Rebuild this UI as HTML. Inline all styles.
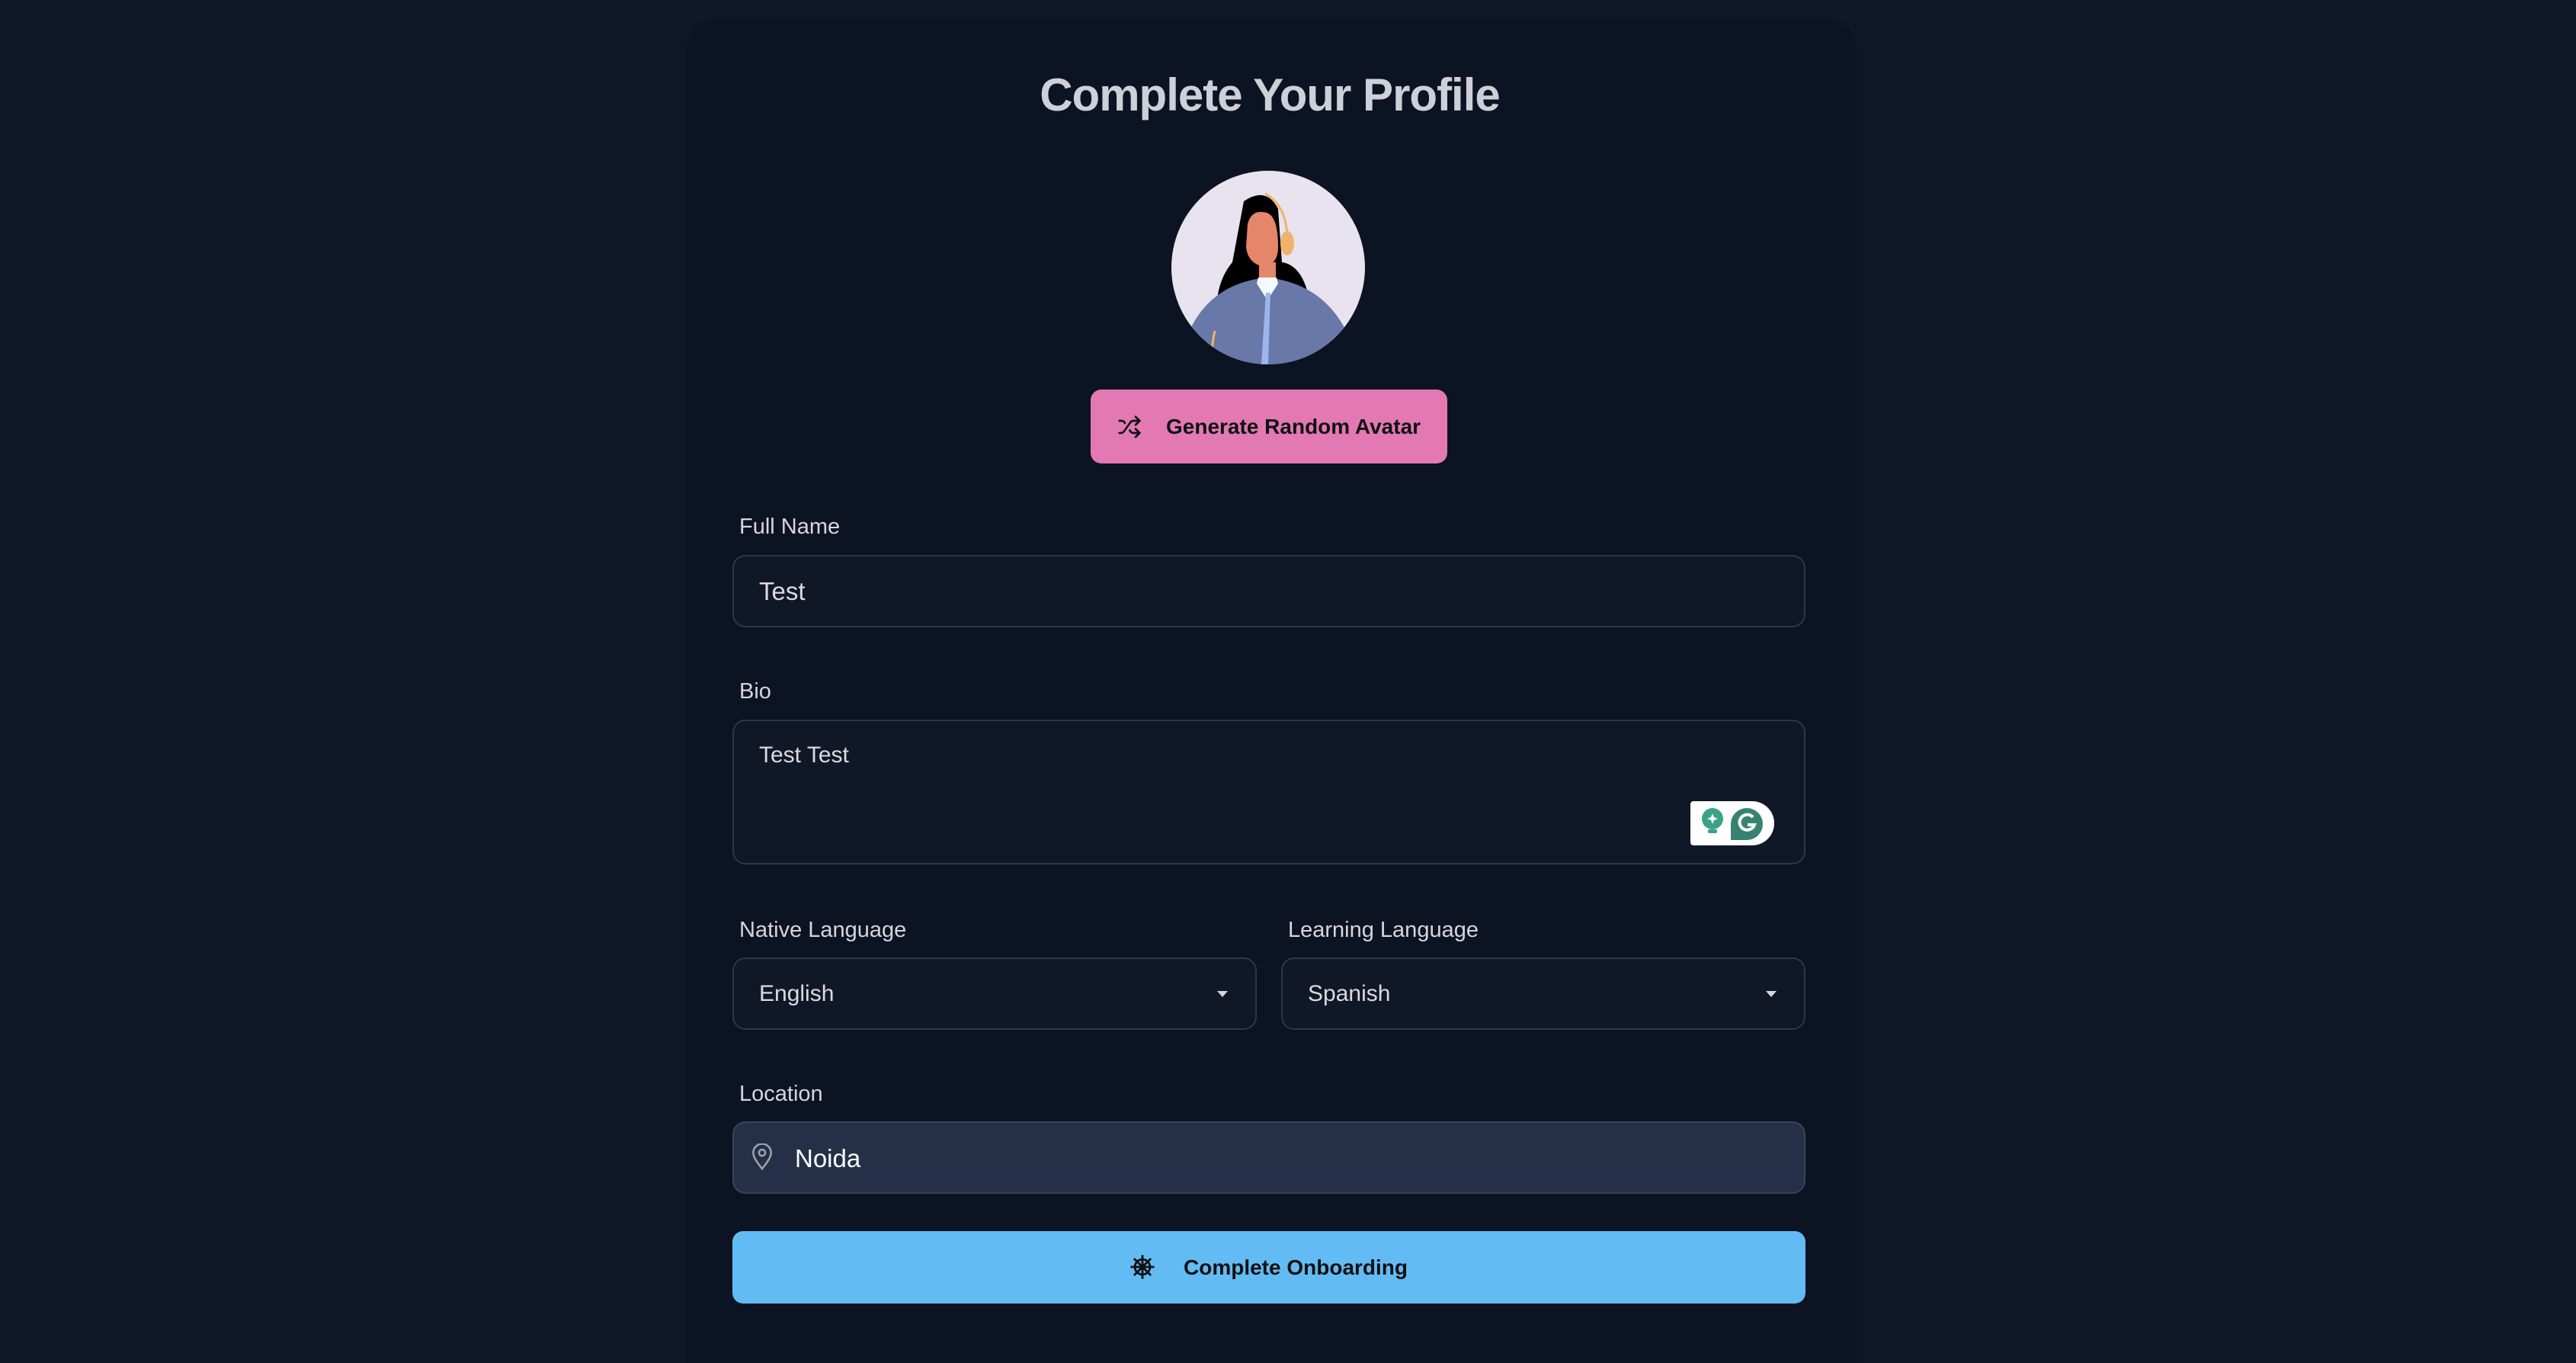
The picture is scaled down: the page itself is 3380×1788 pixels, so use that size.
<!DOCTYPE html>
<html><head><meta charset="utf-8"><style>
*{box-sizing:border-box;margin:0;padding:0}
html,body{width:3380px;height:1788px;background:#0f1729;overflow:hidden;font-family:"Liberation Sans",sans-serif;position:relative}
.card{position:absolute;left:901px;top:24px;width:1535px;height:1764px;background:#0c1322;border-radius:40px 40px 0 0}
.abs{position:absolute}
h1{position:absolute;left:901px;width:1530px;top:90px;text-align:center;color:#cdd0d6;font-size:60px;font-weight:bold;letter-spacing:-1px}
.lbl{position:absolute;left:970px;color:#d4d7dd;font-size:29px}
.box{position:absolute;background:#101828;border:2px solid #2f3644;border-radius:17px}
.txt{position:absolute;color:#d8dbe0}
</style></head><body>
<div class="card"></div>
<h1>Complete Your Profile</h1>
<svg class="abs" style="left:1537px;top:224px" width="254" height="254" viewBox="0 0 254 254">
<defs><clipPath id="c"><circle cx="127" cy="127" r="127"/></clipPath></defs>
<g clip-path="url(#c)">
<rect width="254" height="254" fill="#e8e3ee"/>
<path d="M95 40 Q125 20 140 50 L145 120 Q180 125 185 200 L60 200 Q55 150 80 120 Z" fill="#000"/>
<path d="M100 70 Q105 50 125 55 Q140 60 140 100 Q140 125 118 125 Q100 120 98 100 Z" fill="#e5866a"/>
<rect x="115" y="120" width="22" height="30" fill="#e5866a"/>
<path d="M10 254 Q30 150 125 140 Q220 150 245 254 Z" fill="#6878a8"/>
<path d="M112 148 L126 170 L140 148 L138 140 L114 140 Z" fill="#f4f8ff"/>
<path d="M124 160 L130 160 L127 254 L118 254 Z" fill="#9ab6ec"/>
<ellipse cx="152" cy="95" rx="9" ry="16" fill="#f1b36c"/>
<path d="M123 30 Q150 45 152 85" stroke="#f1b36c" stroke-width="3" fill="none"/>
<path d="M57 210 Q52 230 54 254" stroke="#f1b36c" stroke-width="3" fill="none"/>
</g></svg>
<div class="abs" style="left:1431px;top:511px;width:468px;height:97px;background:#e279b3;border-radius:14px"></div>
<svg class="abs" style="left:1466px;top:544px" width="32" height="32" viewBox="0 0 24 24" fill="none" stroke="#111" stroke-width="2" stroke-linecap="round" stroke-linejoin="round"><path d="M2 18h1.4c1.3 0 2.5-.6 3.3-1.7l6.1-8.6c.7-1.1 2-1.7 3.3-1.7H22"/><path d="m18 2 4 4-4 4"/><path d="M2 6h1.9c1.5 0 2.9.9 3.6 2.2"/><path d="M22 18h-5.9c-1.3 0-2.6-.7-3.3-1.8l-.5-.8"/><path d="m18 14 4 4-4 4"/></svg>
<div class="txt" style="left:1530px;top:544px;color:#111;font-size:28px;font-weight:bold">Generate Random Avatar</div>

<div class="lbl" style="top:675px">Full Name</div>
<div class="box" style="left:961px;top:728px;width:1408px;height:95px"></div>
<div class="txt" style="left:996px;top:757px;font-size:33px">Test</div>

<div class="lbl" style="top:891px">Bio</div>
<div class="box" style="left:961px;top:944px;width:1408px;height:190px"></div>
<div class="txt" style="left:996px;top:974px;font-size:30px">Test Test</div>
<div class="abs" style="left:2218px;top:1051px;width:110px;height:58px;background:#fff;border-radius:4px 29px 29px 4px"></div>
<svg class="abs" style="left:2232px;top:1058px" width="90" height="44" viewBox="0 0 90 44">
<circle cx="15" cy="16" r="14" fill="#3aa288"/><rect x="9" y="30" width="12" height="5" rx="2" fill="#3aa288"/>
<path d="M15 9 L17 14 L22 16 L17 18 L15 23 L13 18 L8 16 L13 14Z" fill="#fff"/>
<path d="M60 2 A21 21 0 1 1 60 44 L39 44 L39 23 A21 21 0 0 1 60 2Z" fill="#37836f"/>
<path d="M68 14 A10 10 0 1 0 70 24 L61 24" stroke="#fff" stroke-width="4" fill="none"/>
</svg>

<div class="lbl" style="top:1204px">Native Language</div>
<div class="lbl" style="top:1204px;left:1690px">Learning Language</div>
<div class="box" style="left:961px;top:1256px;width:688px;height:95px"></div>
<div class="box" style="left:1681px;top:1256px;width:688px;height:95px"></div>
<div class="txt" style="left:996px;top:1287px;font-size:30px">English</div>
<div class="txt" style="left:1716px;top:1287px;font-size:30px">Spanish</div>
<div class="abs" style="left:1597px;top:1300px;border-left:7px solid transparent;border-right:7px solid transparent;border-top:8px solid #d4d7dd"></div>
<div class="abs" style="left:2317px;top:1300px;border-left:7px solid transparent;border-right:7px solid transparent;border-top:8px solid #d4d7dd"></div>

<div class="lbl" style="top:1419px">Location</div>
<div class="box" style="left:961px;top:1471px;width:1408px;height:95px;background:#253048;border-color:#3a4356"></div>
<svg class="abs" style="left:986px;top:1500px" width="28" height="36" viewBox="0 0 24 30" fill="none" stroke="#9aa1ad" stroke-width="2.2"><path d="M12 28 C4 18 2 14 2 10 A10 10 0 0 1 22 10 C22 14 20 18 12 28Z"/><circle cx="12" cy="10" r="3.5"/></svg>
<div class="txt" style="left:1043px;top:1501px;font-size:33px;color:#fff">Noida</div>

<div class="abs" style="left:961px;top:1615px;width:1408px;height:95px;background:#63bbf3;border-radius:14px"></div>
<svg class="abs" style="left:1482px;top:1645px" width="34" height="34" viewBox="0 0 24 24" fill="none" stroke="#111" stroke-width="2"><circle cx="12" cy="12" r="7"/><circle cx="12" cy="12" r="2"/><path d="M12 1v22M1 12h22M4.2 4.2l15.6 15.6M19.8 4.2 4.2 19.8"/></svg>
<div class="txt" style="left:1553px;top:1647px;color:#111;font-size:28px;font-weight:bold">Complete Onboarding</div>
</body></html>
